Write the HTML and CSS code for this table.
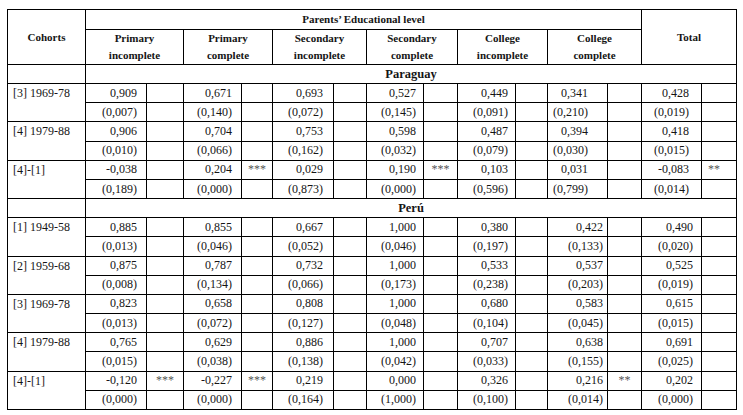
FILE: index.html
```html
<!DOCTYPE html>
<html lang="en">
<head>
<meta charset="utf-8">
<title>Parents' Educational level by cohorts</title>
<link rel="stylesheet" href="styles.css">
</head>
<body>
<div class="page">
  <div class="title"><span>Table 6. Upward mobility probability by cohorts, parents' educational level (Paraguay, Perú)</span></div>
  <table class="grid">
    <colgroup>
      <col class="w-coh">
      <col class="w61"><col class="w37">
      <col class="w58"><col class="w31">
      <col class="w61"><col class="w33">
      <col class="w57"><col class="w34">
      <col class="w58"><col class="w32">
      <col class="w60"><col class="w34">
      <col class="w60"><col class="w35">
    </colgroup>
    <thead>
      <tr class="h1">
        <th rowspan="2" class="hd">Cohorts</th>
        <th colspan="12" class="hd">Parents’ Educational level</th>
        <th colspan="2" rowspan="2" class="hd">Total</th>
      </tr>
      <tr class="h2">
        <th colspan="2" class="hd">Primary<br>incomplete</th>
        <th colspan="2" class="hd">Primary<br>complete</th>
        <th colspan="2" class="hd">Secondary<br>incomplete</th>
        <th colspan="2" class="hd">Secondary<br>complete</th>
        <th colspan="2" class="hd">College<br>incomplete</th>
        <th colspan="2" class="hd">College<br>complete</th>
      </tr>
    </thead>
    <tbody class="py">
      <tr class="sec"><td></td><td colspan="14" class="country">Paraguay</td></tr>
      <tr class="d"><td rowspan="2" class="coh">[3] 1969-78</td><td class="v c1">0,909</td><td class="s"></td><td class="v c2">0,671</td><td class="s"></td><td class="v c3">0,693</td><td class="s"></td><td class="v c4">0,527</td><td class="s"></td><td class="v c5">0,449</td><td class="s"></td><td class="v c6">0,341</td><td class="s"></td><td class="v c7">0,428</td><td class="s"></td></tr>
      <tr class="d"><td class="v c1">(0,007)</td><td class="s"></td><td class="v c2">(0,140)</td><td class="s"></td><td class="v c3">(0,072)</td><td class="s"></td><td class="v c4">(0,145)</td><td class="s"></td><td class="v c5">(0,091)</td><td class="s"></td><td class="v c6">(0,210)</td><td class="s"></td><td class="v c7">(0,019)</td><td class="s"></td></tr>
      <tr class="d"><td rowspan="2" class="coh">[4] 1979-88</td><td class="v c1">0,906</td><td class="s"></td><td class="v c2">0,704</td><td class="s"></td><td class="v c3">0,753</td><td class="s"></td><td class="v c4">0,598</td><td class="s"></td><td class="v c5">0,487</td><td class="s"></td><td class="v c6">0,394</td><td class="s"></td><td class="v c7">0,418</td><td class="s"></td></tr>
      <tr class="d"><td class="v c1">(0,010)</td><td class="s"></td><td class="v c2">(0,066)</td><td class="s"></td><td class="v c3">(0,162)</td><td class="s"></td><td class="v c4">(0,032)</td><td class="s"></td><td class="v c5">(0,079)</td><td class="s"></td><td class="v c6">(0,030)</td><td class="s"></td><td class="v c7">(0,015)</td><td class="s"></td></tr>
      <tr class="d"><td rowspan="2" class="coh">[4]-[1]</td><td class="v c1">-0,038</td><td class="s"></td><td class="v c2">0,204</td><td class="s">***</td><td class="v c3">0,029</td><td class="s"></td><td class="v c4">0,190</td><td class="s">***</td><td class="v c5">0,103</td><td class="s"></td><td class="v c6">0,031</td><td class="s"></td><td class="v c7">-0,083</td><td class="s st">**</td></tr>
      <tr class="d"><td class="v c1">(0,189)</td><td class="s"></td><td class="v c2">(0,000)</td><td class="s"></td><td class="v c3">(0,873)</td><td class="s"></td><td class="v c4">(0,000)</td><td class="s"></td><td class="v c5">(0,596)</td><td class="s"></td><td class="v c6">(0,799)</td><td class="s"></td><td class="v c7">(0,014)</td><td class="s"></td></tr>
    </tbody>
    <tbody class="pe">
      <tr class="sec"><td></td><td colspan="14" class="country">Perú</td></tr>
      <tr class="d"><td rowspan="2" class="coh">[1] 1949-58</td><td class="v c1">0,885</td><td class="s"></td><td class="v c2">0,855</td><td class="s"></td><td class="v c3">0,667</td><td class="s"></td><td class="v c4">1,000</td><td class="s"></td><td class="v c5">0,380</td><td class="s"></td><td class="v c6">0,422</td><td class="s"></td><td class="v c7">0,490</td><td class="s"></td></tr>
      <tr class="d"><td class="v c1">(0,013)</td><td class="s"></td><td class="v c2">(0,046)</td><td class="s"></td><td class="v c3">(0,052)</td><td class="s"></td><td class="v c4">(0,046)</td><td class="s"></td><td class="v c5">(0,197)</td><td class="s"></td><td class="v c6">(0,133)</td><td class="s"></td><td class="v c7">(0,020)</td><td class="s"></td></tr>
      <tr class="d"><td rowspan="2" class="coh">[2] 1959-68</td><td class="v c1">0,875</td><td class="s"></td><td class="v c2">0,787</td><td class="s"></td><td class="v c3">0,732</td><td class="s"></td><td class="v c4">1,000</td><td class="s"></td><td class="v c5">0,533</td><td class="s"></td><td class="v c6">0,537</td><td class="s"></td><td class="v c7">0,525</td><td class="s"></td></tr>
      <tr class="d"><td class="v c1">(0,008)</td><td class="s"></td><td class="v c2">(0,134)</td><td class="s"></td><td class="v c3">(0,066)</td><td class="s"></td><td class="v c4">(0,173)</td><td class="s"></td><td class="v c5">(0,238)</td><td class="s"></td><td class="v c6">(0,203)</td><td class="s"></td><td class="v c7">(0,019)</td><td class="s"></td></tr>
      <tr class="d"><td rowspan="2" class="coh">[3] 1969-78</td><td class="v c1">0,823</td><td class="s"></td><td class="v c2">0,658</td><td class="s"></td><td class="v c3">0,808</td><td class="s"></td><td class="v c4">1,000</td><td class="s"></td><td class="v c5">0,680</td><td class="s"></td><td class="v c6">0,583</td><td class="s"></td><td class="v c7">0,615</td><td class="s"></td></tr>
      <tr class="d"><td class="v c1">(0,013)</td><td class="s"></td><td class="v c2">(0,072)</td><td class="s"></td><td class="v c3">(0,127)</td><td class="s"></td><td class="v c4">(0,048)</td><td class="s"></td><td class="v c5">(0,104)</td><td class="s"></td><td class="v c6">(0,045)</td><td class="s"></td><td class="v c7">(0,015)</td><td class="s"></td></tr>
      <tr class="d"><td rowspan="2" class="coh">[4] 1979-88</td><td class="v c1">0,765</td><td class="s"></td><td class="v c2">0,629</td><td class="s"></td><td class="v c3">0,886</td><td class="s"></td><td class="v c4">1,000</td><td class="s"></td><td class="v c5">0,707</td><td class="s"></td><td class="v c6">0,638</td><td class="s"></td><td class="v c7">0,691</td><td class="s"></td></tr>
      <tr class="d"><td class="v c1">(0,015)</td><td class="s"></td><td class="v c2">(0,038)</td><td class="s"></td><td class="v c3">(0,138)</td><td class="s"></td><td class="v c4">(0,042)</td><td class="s"></td><td class="v c5">(0,033)</td><td class="s"></td><td class="v c6">(0,155)</td><td class="s"></td><td class="v c7">(0,025)</td><td class="s"></td></tr>
      <tr class="d"><td rowspan="2" class="coh">[4]-[1]</td><td class="v c1">-0,120</td><td class="s">***</td><td class="v c2">-0,227</td><td class="s">***</td><td class="v c3">0,219</td><td class="s"></td><td class="v c4">0,000</td><td class="s"></td><td class="v c5">0,326</td><td class="s"></td><td class="v c6">0,216</td><td class="s">**</td><td class="v c7">0,202</td><td class="s"></td></tr>
      <tr class="d"><td class="v c1">(0,000)</td><td class="s"></td><td class="v c2">(0,000)</td><td class="s"></td><td class="v c3">(0,164)</td><td class="s"></td><td class="v c4">(1,000)</td><td class="s"></td><td class="v c5">(0,100)</td><td class="s"></td><td class="v c6">(0,014)</td><td class="s"></td><td class="v c7">(0,000)</td><td class="s"></td></tr>
    </tbody>
  </table>
</div>
</body>
</html>
```

FILE: styles.css
```css
html, body {
  margin: 0;
  padding: 0;
  background: #ffffff;
}

body {
  font-family: "Liberation Serif", "Times New Roman", serif;
  color: #151515;
}

.page {
  padding: 0 0 0 7px;
}

.title {
  height: 9px;
  overflow: hidden;
  color: #2450c8;
  font-weight: bold;
  font-size: 14px;
}

.title span {
  display: block;
  line-height: 16px;
  margin-top: -15px;
  padding-left: 20px;
  white-space: nowrap;
}

.grid {
  border-collapse: collapse;
  table-layout: fixed;
  width: 730px;
  font-size: 12px;
}

.grid th,
.grid td {
  border: 1px solid #000;
  padding: 0;
  vertical-align: middle;
}

.w-coh { width: 78px; }
.w61 { width: 61px; }
.w37 { width: 37px; }
.w58 { width: 58px; }
.w31 { width: 31px; }
.w33 { width: 33px; }
.w57 { width: 57px; }
.w34 { width: 34px; }
.w32 { width: 32px; }
.w60 { width: 60px; }
.w35 { width: 35px; }

.h1 { height: 20px; }
.h2 { height: 35px; }
.sec { height: 19px; }
.d { height: 19.2px; }

.hd {
  font-size: 11px;
  font-weight: bold;
  line-height: 17px;
  text-align: center;
}

.country {
  font-weight: bold;
  font-size: 12.5px;
  text-align: center;
  line-height: 17px;
}

.grid td.coh {
  vertical-align: top;
  text-align: left;
  padding-left: 5px;
  line-height: 19px;
  white-space: nowrap;
}

.v {
  text-align: right;
  line-height: 17px;
  white-space: nowrap;
}

.s {
  text-align: center;
  color: #555;
  line-height: 17px;
  white-space: nowrap;
}

.grid td.st {
  padding-right: 10px;
}

.grid td.c1 { padding-right: 9px; }
.grid td.c2 { padding-right: 9px; }
.grid td.c3 { padding-right: 10px; }
.grid td.c4 { padding-right: 7px; }
.grid td.c5 { padding-right: 7px; }
.py td.c6 { padding-right: 19px; }
.pe td.c6 { padding-right: 4px; }
.py td.c7 { padding-right: 12px; }
.pe td.c7 { padding-right: 8px; }
```
